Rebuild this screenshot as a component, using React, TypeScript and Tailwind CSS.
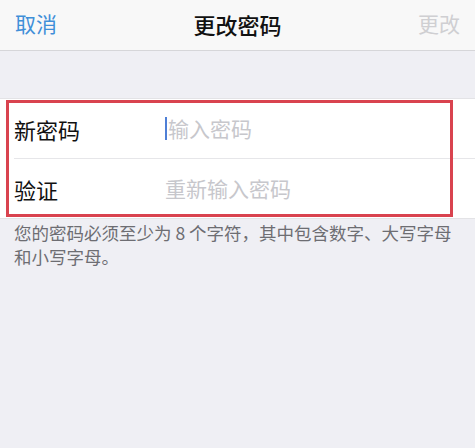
import React from "react";

export default function App() {
  const font = { fontFamily: '"Noto Sans CJK SC", "Noto Sans", sans-serif' };
  return (
    <div className="w-[475px] h-[448px] bg-[#efeff4] overflow-hidden" style={font}>
      <div className="h-[51px] bg-[#f8f8f8] border-b border-[#d6d6d9] flex items-center justify-between px-[15px] pb-[3px]">
        <span className="text-[21px] text-[#3f8fd8] leading-none">取消</span>
        <span className="text-[22px] text-[#111] font-medium leading-none">更改密码</span>
        <span className="text-[21px] text-[#cfcfd2] leading-none">更改</span>
      </div>
      <div className="h-[47px]" />
      <div className="relative bg-white border-y border-[#e3e3e6]">
        <div className="flex items-center h-[59px] pl-[14px]">
          <span className="w-[151px] text-[22px] text-[#111] leading-none">新密码</span>
          <span className="relative flex items-center">
            <span className="w-[2px] h-[23px] bg-[#4f7fd6] mr-[1px]" />
            <span className="text-[21px] text-[#c7c7cc] leading-none">输入密码</span>
          </span>
        </div>
        <div className="ml-[14px] h-px bg-[#e6e6e9]" />
        <div className="flex items-center h-[59px] pl-[14px]">
          <span className="w-[151px] text-[22px] text-[#111] leading-none">验证</span>
          <span className="text-[21px] text-[#c7c7cc] leading-none">重新输入密码</span>
        </div>
        <div className="absolute left-[6px] top-[1px] w-[447px] h-[117px] border-[3px] border-[#d9434f] pointer-events-none" />
      </div>
      <div className="px-[14px] pt-[2px] text-[17.5px] leading-[24px] text-[#6d6d72]">
        您的密码必须至少为 8 个字符，其中包含数字、大写字母和小写字母。
      </div>
    </div>
  );
}
